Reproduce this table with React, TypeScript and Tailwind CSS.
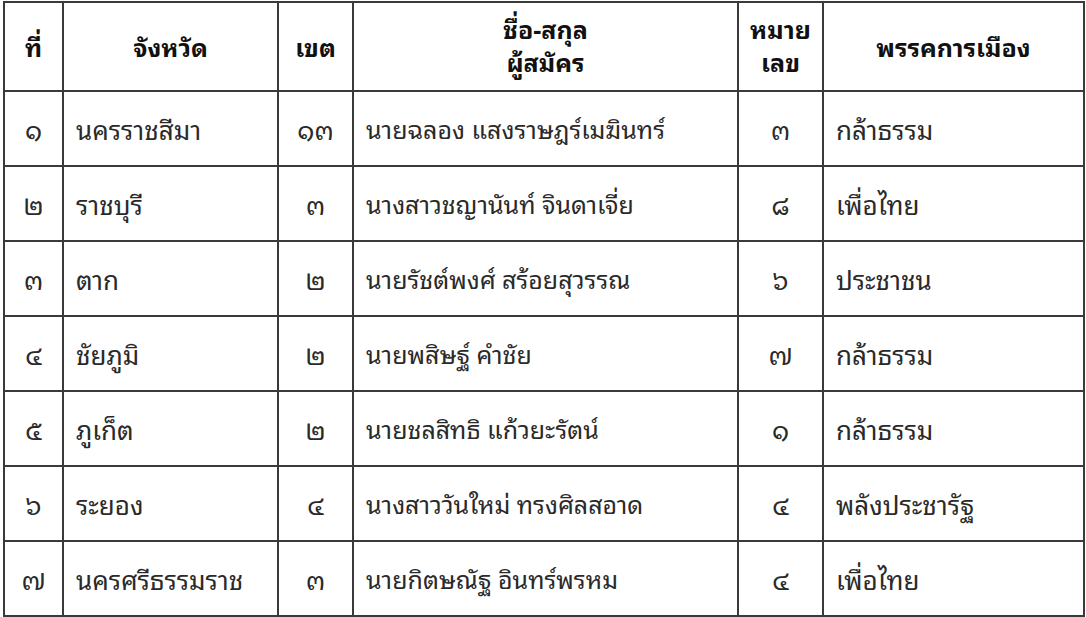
const rows = [
  { no: "๑", province: "นครราชสีมา", zone: "๑๓", name: "นายฉลอง แสงราษฎร์เมฆินทร์", num: "๓", party: "กล้าธรรม" },
  { no: "๒", province: "ราชบุรี", zone: "๓", name: "นางสาวชญานันท์ จินดาเจี่ย", num: "๘", party: "เพื่อไทย" },
  { no: "๓", province: "ตาก", zone: "๒", name: "นายรัชต์พงศ์ สร้อยสุวรรณ", num: "๖", party: "ประชาชน" },
  { no: "๔", province: "ชัยภูมิ", zone: "๒", name: "นายพสิษฐ์ คำชัย", num: "๗", party: "กล้าธรรม" },
  { no: "๕", province: "ภูเก็ต", zone: "๒", name: "นายชลสิทธิ แก้วยะรัตน์", num: "๑", party: "กล้าธรรม" },
  { no: "๖", province: "ระยอง", zone: "๔", name: "นางสาววันใหม่ ทรงศิลสอาด", num: "๔", party: "พลังประชารัฐ" },
  { no: "๗", province: "นครศรีธรรมราช", zone: "๓", name: "นายกิตษณัฐ อินทร์พรหม", num: "๔", party: "เพื่อไทย" },
];

const cell = "border-2 border-[#3a3a3a]";

export default function App() {
  return (
    <div className="w-[1086px] h-[617px] bg-white pl-[3px] pt-px overflow-hidden [font-family:'Noto_Sans_Thai_Looped','Loma','Garuda','Tahoma','Noto_Sans',sans-serif]">
      <table className="w-[1080px] border-collapse table-fixed">
        <colgroup>
          <col className="w-[59px]" />
          <col className="w-[215px]" />
          <col className="w-[75px]" />
          <col className="w-[385px]" />
          <col className="w-[85px]" />
          <col className="w-[261px]" />
        </colgroup>
        <thead>
          <tr className="h-[89px] text-[25px] font-bold text-[#111] leading-[33px]">
            <th className={`${cell} text-center`}>ที่</th>
            <th className={`${cell} text-center`}>จังหวัด</th>
            <th className={`${cell} text-center`}>เขต</th>
            <th className={`${cell} text-center`}>
              <div className="-mt-1">ชื่อ-สกุล</div>
              <div>ผู้สมัคร</div>
            </th>
            <th className={`${cell} text-center`}>
              <div className="-mt-1">หมาย</div>
              <div>เลข</div>
            </th>
            <th className={`${cell} text-center`}>พรรคการเมือง</th>
          </tr>
        </thead>
        <tbody>
          {rows.map((r) => (
            <tr key={r.no} className="h-[75px] text-[26px] text-[#2a2a2a]">
              <td className={`${cell} text-center`}>{r.no}</td>
              <td className={`${cell} pl-3`}>{r.province}</td>
              <td className={`${cell} text-center`}>{r.zone}</td>
              <td className={`${cell} pl-3 whitespace-nowrap text-[25px]`}>{r.name}</td>
              <td className={`${cell} text-center`}>{r.num}</td>
              <td className={`${cell} pl-3`}>{r.party}</td>
            </tr>
          ))}
        </tbody>
      </table>
    </div>
  );
}
